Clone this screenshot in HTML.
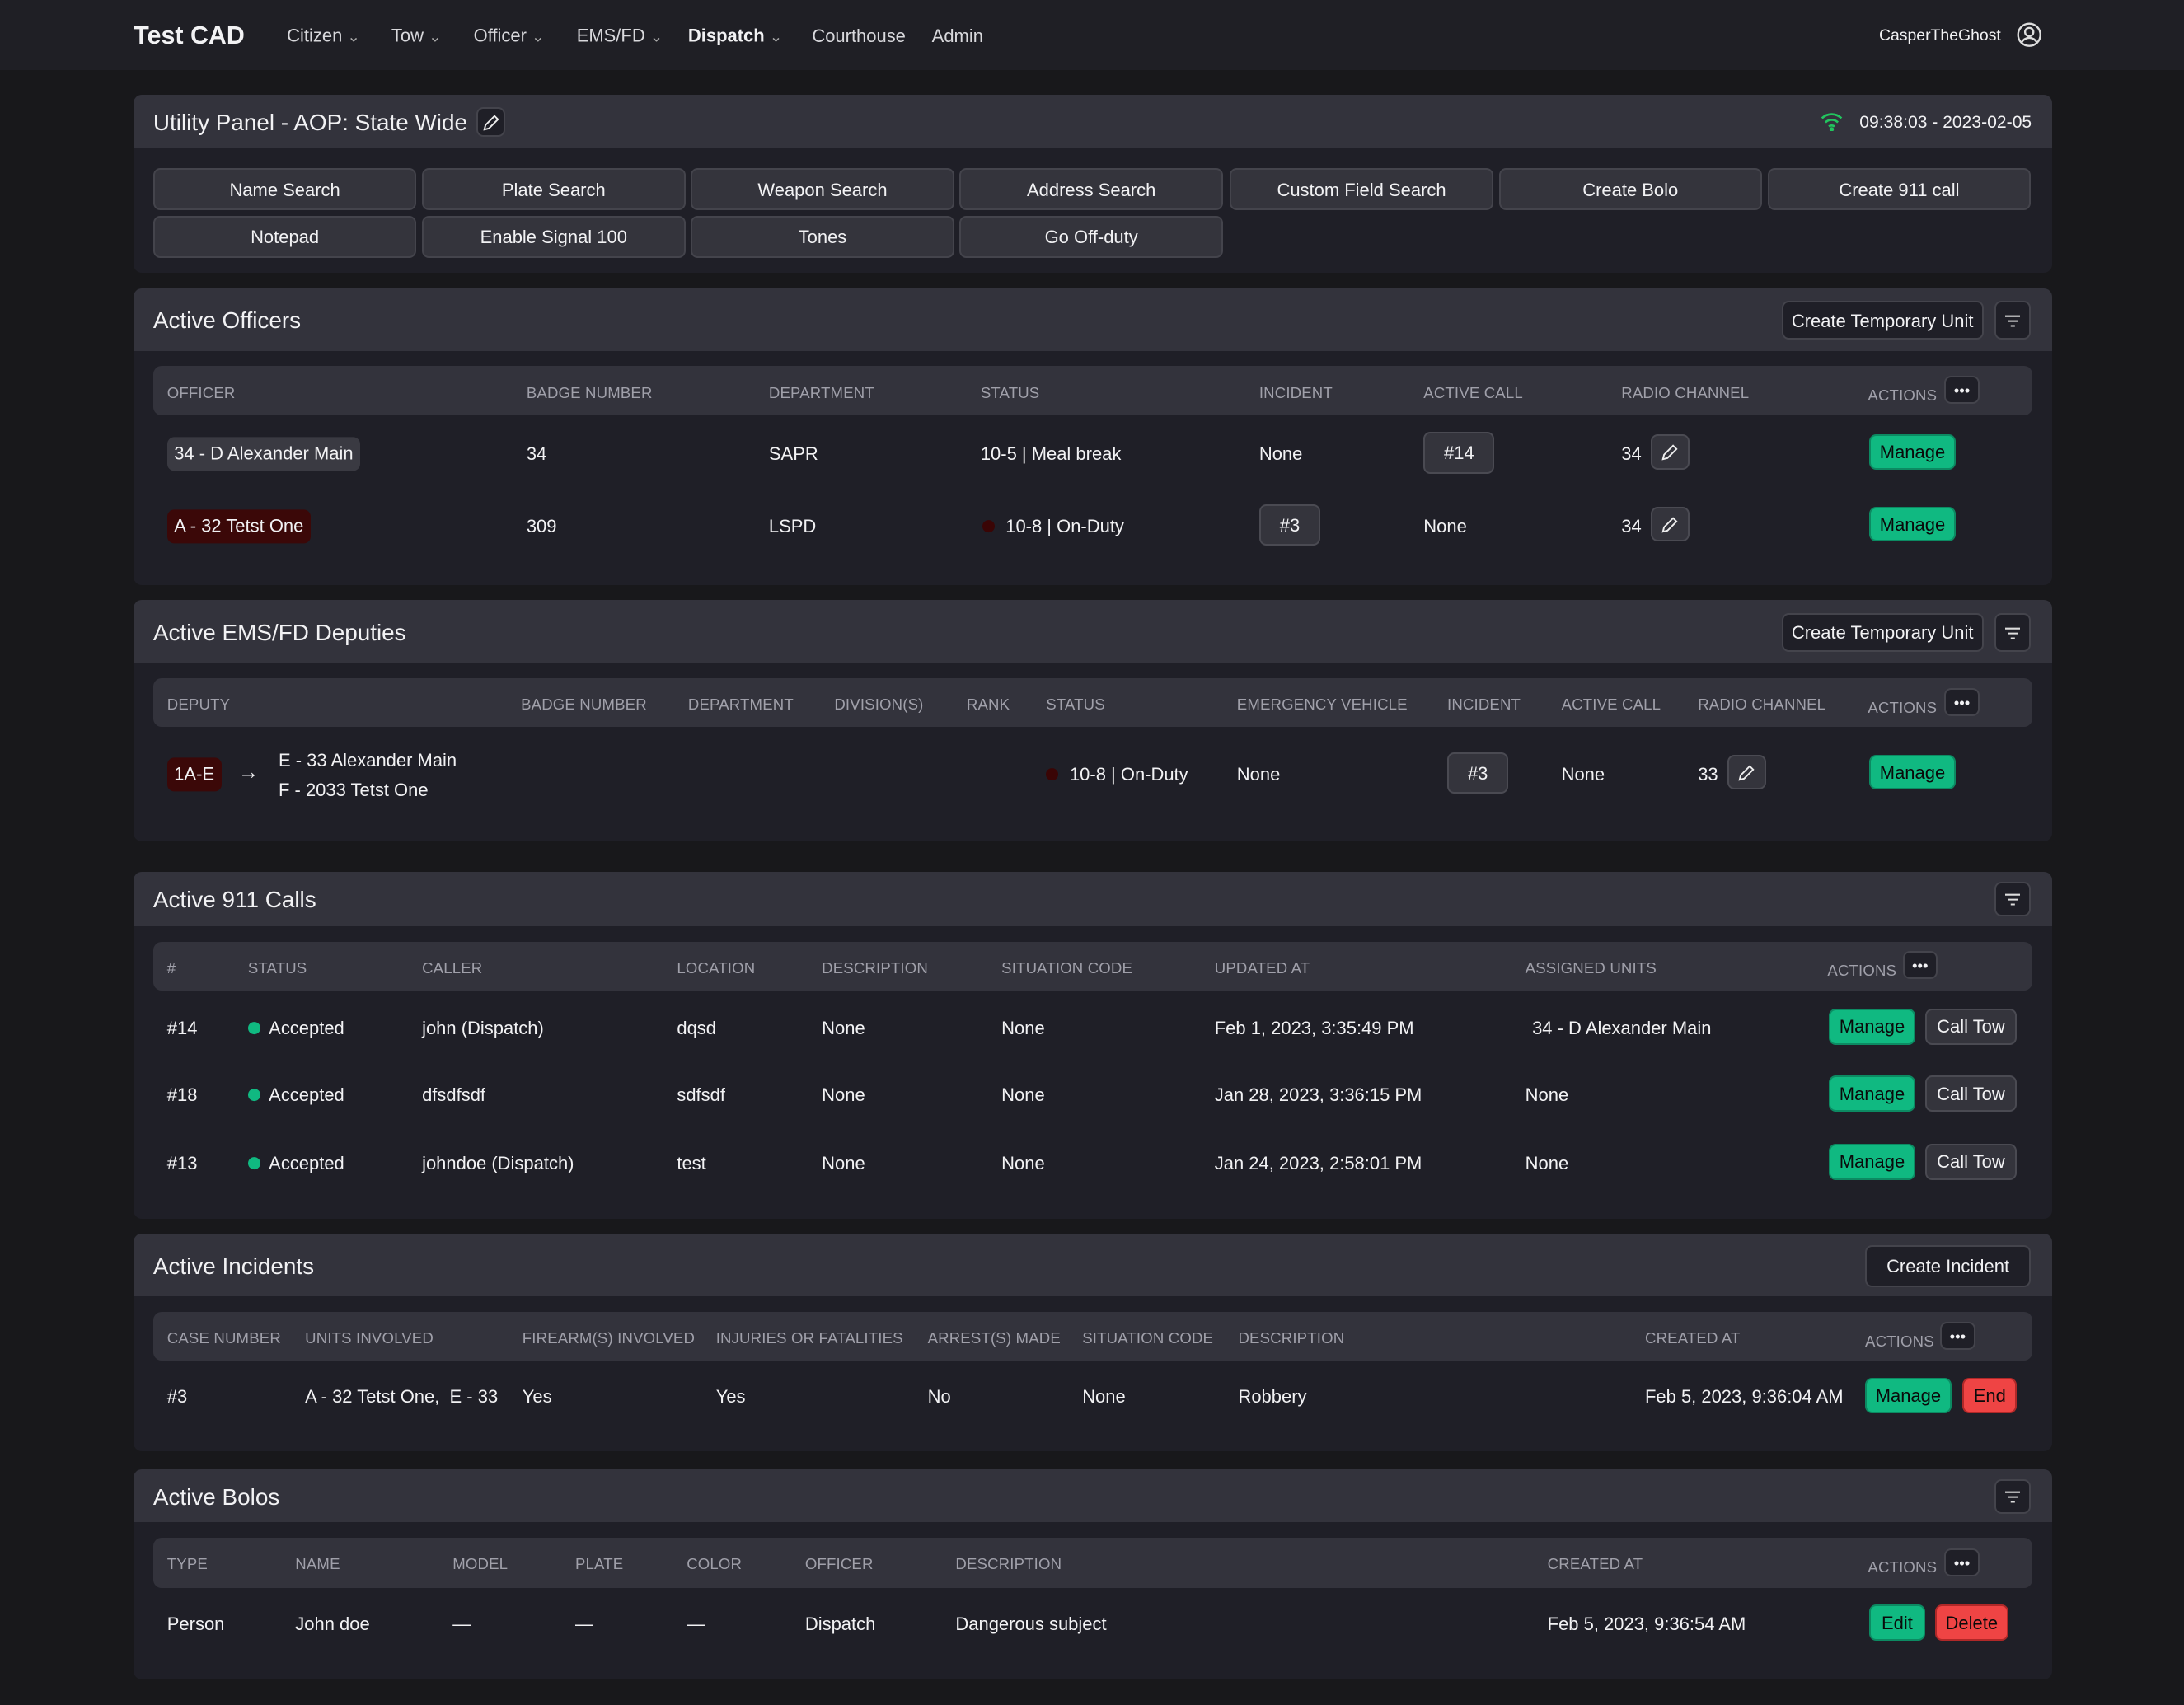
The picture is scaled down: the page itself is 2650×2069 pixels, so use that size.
<!DOCTYPE html>
<html><head><meta charset="utf-8">
<style>
html,body{margin:0;padding:0;background:#18181b;}
body{width:2650px;height:2068px;overflow:hidden;}
#z{zoom:1.6901;width:1568px;height:1224px;position:relative;font-family:"Liberation Sans",sans-serif;color:#f2f2f4;font-size:13px;}
.a{position:absolute;}
.t{position:absolute;white-space:nowrap;line-height:20px;transform:translateY(calc(-50% + 1px));}
.nav{left:0;top:0;width:1568px;height:50px;background:#1f1f25;}
.card{position:absolute;left:96px;width:1377px;background:#1f1f27;border-radius:6px;overflow:hidden;}
.hd{position:absolute;left:0;top:0;width:100%;background:#33333c;}
.th{position:absolute;left:14px;width:1349px;background:#33333c;border-radius:6px;}
.h{font-size:11px;color:#a0a0aa;letter-spacing:.1px;}
.ttl{font-size:16.5px;font-weight:normal;}
.b{position:absolute;display:flex;align-items:center;justify-content:center;border-radius:5px;box-sizing:border-box;white-space:nowrap;font-size:13px;padding-top:1px;}
.ub{background:#34343c;border:1.5px solid #44444c;}
.g{background:#10b981;border:1.5px solid #0c8a62;color:#0a0a0a;}
.r{background:#ef4444;border:1.5px solid #b02828;color:#0a0a0a;}
.gr{background:#34343c;border:1.5px solid #4a4a52;}
.dk{background:#1f1f27;border:1.5px solid #44444c;}
.chip{position:absolute;border-radius:5px;padding:0 5px;line-height:24px;transform:translateY(calc(-50% + 1px));white-space:nowrap;}
.dot{position:absolute;width:9px;height:9px;border-radius:50%;transform:translateY(calc(-50% + 1px));}
.cv{color:#aaa;font-size:11px;}
</style></head><body><div id="z">

<div class="a nav"></div>
<div class="t" style="left:96px;top:25px;font-size:18px;font-weight:bold;">Test CAD</div>
<div class="t" style="left:206px;top:25px;color:#d8d8dc">Citizen <span class="cv">&#8964;</span></div>
<div class="t" style="left:281px;top:25px;color:#d8d8dc">Tow <span class="cv">&#8964;</span></div>
<div class="t" style="left:340px;top:25px;color:#d8d8dc">Officer <span class="cv">&#8964;</span></div>
<div class="t" style="left:414px;top:25px;color:#d8d8dc">EMS/FD <span class="cv">&#8964;</span></div>
<div class="t" style="left:494px;top:25px;font-weight:bold">Dispatch <span class="cv" style="font-weight:normal">&#8964;</span></div>
<div class="t" style="left:583px;top:25px;color:#d8d8dc">Courthouse</div>
<div class="t" style="left:669px;top:25px;color:#d8d8dc">Admin</div>
<div class="t" style="left:1349px;top:25px;font-size:11.5px">CasperTheGhost</div>
<svg class="a" style="left:1448px;top:16px" width="18" height="18" viewBox="0 0 18 18" fill="none" stroke="#ddd" stroke-width="1.4"><circle cx="9" cy="9" r="8"/><circle cx="9" cy="7" r="3"/><path d="M3.5 14.5c1.5-2.5 3.3-3.3 5.5-3.3s4 .8 5.5 3.3"/></svg>

<!-- Utility -->
<div class="card" style="top:68px;height:128px">
 <div class="hd" style="height:38px"></div>
 <div class="t ttl" style="left:14px;top:19px">Utility Panel - AOP: State Wide</div>
 <div class="b dk" style="left:246px;top:9px;width:21px;height:21px"><svg width="13" height="13" viewBox="0 0 16 16" fill="none" stroke="#eee" stroke-width="1.4"><path d="M11 2l3 3-8 8-4 1 1-4z"/></svg></div>
 <svg class="a" style="left:1211px;top:12px" width="16" height="14" viewBox="0 0 16 14" fill="none" stroke="#22c55e" stroke-width="1.6"><path d="M1 5a10 10 0 0 1 14 0M3.5 8a6.5 6.5 0 0 1 9 0M6 11a3 3 0 0 1 4 0"/><circle cx="8" cy="13" r=".8" fill="#22c55e"/></svg>
 <div class="t" style="left:1239px;top:19px;font-size:12.5px">09:38:03 - 2023-02-05</div>
 <div class="b ub" style="left:14px;top:53px;width:189px;height:30px">Name Search</div>
 <div class="b ub" style="left:207px;top:53px;width:189px;height:30px">Plate Search</div>
 <div class="b ub" style="left:400px;top:53px;width:189px;height:30px">Weapon Search</div>
 <div class="b ub" style="left:593px;top:53px;width:189px;height:30px">Address Search</div>
 <div class="b ub" style="left:787px;top:53px;width:189px;height:30px">Custom Field Search</div>
 <div class="b ub" style="left:980px;top:53px;width:189px;height:30px">Create Bolo</div>
 <div class="b ub" style="left:1173px;top:53px;width:189px;height:30px">Create 911 call</div>
 <div class="b ub" style="left:14px;top:87px;width:189px;height:30px">Notepad</div>
 <div class="b ub" style="left:207px;top:87px;width:189px;height:30px">Enable Signal 100</div>
 <div class="b ub" style="left:400px;top:87px;width:189px;height:30px">Tones</div>
 <div class="b ub" style="left:593px;top:87px;width:189px;height:30px">Go Off-duty</div>
</div>

<!-- Active Officers -->
<div class="card" style="top:207px;height:213px">
 <div class="hd" style="height:45px"></div>
 <div class="t ttl" style="left:14px;top:22px">Active Officers</div>
 <div class="b dk" style="left:1183px;top:9px;width:145px;height:28px">Create Temporary Unit</div>
 <div class="b dk" style="left:1336px;top:9px;width:26px;height:28px"><svg width="11" height="9" viewBox="0 0 11 9" stroke="#ddd" stroke-width="1.2"><path d="M0 1h11M2 4.5h7M4 8h3"/></svg></div>
 <div class="th" style="top:56px;height:35px"></div>
 <div class="t h" style="left:24px;top:74px">OFFICER</div>
 <div class="t h" style="left:282px;top:74px">BADGE NUMBER</div>
 <div class="t h" style="left:456px;top:74px">DEPARTMENT</div>
 <div class="t h" style="left:608px;top:74px">STATUS</div>
 <div class="t h" style="left:808px;top:74px">INCIDENT</div>
 <div class="t h" style="left:926px;top:74px">ACTIVE CALL</div>
 <div class="t h" style="left:1068px;top:74px">RADIO CHANNEL</div>
 <div class="t h" style="left:1245px;top:76px">ACTIONS</div>
 <div class="b dk" style="left:1300px;top:63px;width:25px;height:20px;font-size:11px">•••</div>
 <div class="chip" style="left:24px;top:118px;background:#3a3a42">34 - D Alexander Main</div>
 <div class="t" style="left:282px;top:118px">34</div>
 <div class="t" style="left:456px;top:118px">SAPR</div>
 <div class="t" style="left:608px;top:118px">10-5 | Meal break</div>
 <div class="t" style="left:808px;top:118px">None</div>
 <div class="b gr" style="left:926px;top:103px;width:51px;height:30px">#14</div>
 <div class="t" style="left:1068px;top:118px">34</div>
 <div class="b gr" style="left:1089px;top:105px;width:28px;height:25px"><svg width="13" height="13" viewBox="0 0 16 16" fill="none" stroke="#eee" stroke-width="1.4"><path d="M11 2l3 3-8 8-4 1 1-4z"/></svg></div>
 <div class="b g" style="left:1246px;top:105px;width:62px;height:25px">Manage</div>
 <div class="chip" style="left:24px;top:170px;background:#3b0808">A - 32 Tetst One</div>
 <div class="t" style="left:282px;top:170px">309</div>
 <div class="t" style="left:456px;top:170px">LSPD</div>
 <div class="dot" style="left:609px;top:170px;background:#3a0505"></div>
 <div class="t" style="left:626px;top:170px">10-8 | On-Duty</div>
 <div class="b gr" style="left:808px;top:155px;width:44px;height:30px">#3</div>
 <div class="t" style="left:926px;top:170px">None</div>
 <div class="t" style="left:1068px;top:170px">34</div>
 <div class="b gr" style="left:1089px;top:157px;width:28px;height:25px"><svg width="13" height="13" viewBox="0 0 16 16" fill="none" stroke="#eee" stroke-width="1.4"><path d="M11 2l3 3-8 8-4 1 1-4z"/></svg></div>
 <div class="b g" style="left:1246px;top:157px;width:62px;height:25px">Manage</div>
</div>

<!-- EMS -->
<div class="card" style="top:431px;height:173px">
 <div class="hd" style="height:45px"></div>
 <div class="t ttl" style="left:14px;top:22px">Active EMS/FD Deputies</div>
 <div class="b dk" style="left:1183px;top:9px;width:145px;height:28px">Create Temporary Unit</div>
 <div class="b dk" style="left:1336px;top:9px;width:26px;height:28px"><svg width="11" height="9" viewBox="0 0 11 9" stroke="#ddd" stroke-width="1.2"><path d="M0 1h11M2 4.5h7M4 8h3"/></svg></div>
 <div class="th" style="top:56px;height:35px"></div>
 <div class="t h" style="left:24px;top:74px">DEPUTY</div>
 <div class="t h" style="left:278px;top:74px">BADGE NUMBER</div>
 <div class="t h" style="left:398px;top:74px">DEPARTMENT</div>
 <div class="t h" style="left:503px;top:74px">DIVISION(S)</div>
 <div class="t h" style="left:598px;top:74px">RANK</div>
 <div class="t h" style="left:655px;top:74px">STATUS</div>
 <div class="t h" style="left:792px;top:74px">EMERGENCY VEHICLE</div>
 <div class="t h" style="left:943px;top:74px">INCIDENT</div>
 <div class="t h" style="left:1025px;top:74px">ACTIVE CALL</div>
 <div class="t h" style="left:1123px;top:74px">RADIO CHANNEL</div>
 <div class="t h" style="left:1245px;top:76px">ACTIONS</div>
 <div class="b dk" style="left:1300px;top:63px;width:25px;height:20px;font-size:11px">•••</div>
 <div class="chip" style="left:24px;top:124px;background:#3b0808">1A-E</div>
 <div class="t" style="left:75px;top:123px;font-size:15px">&rarr;</div>
 <div class="t" style="left:104px;top:114px">E - 33 Alexander Main</div>
 <div class="t" style="left:104px;top:135px">F - 2033 Tetst One</div>
 <div class="dot" style="left:655px;top:124px;background:#3a0505"></div>
 <div class="t" style="left:672px;top:124px">10-8 | On-Duty</div>
 <div class="t" style="left:792px;top:124px">None</div>
 <div class="b gr" style="left:943px;top:109px;width:44px;height:30px">#3</div>
 <div class="t" style="left:1025px;top:124px">None</div>
 <div class="t" style="left:1123px;top:124px">33</div>
 <div class="b gr" style="left:1144px;top:111px;width:28px;height:25px"><svg width="13" height="13" viewBox="0 0 16 16" fill="none" stroke="#eee" stroke-width="1.4"><path d="M11 2l3 3-8 8-4 1 1-4z"/></svg></div>
 <div class="b g" style="left:1246px;top:111px;width:62px;height:25px">Manage</div>
</div>

<!-- 911 -->
<div class="card" style="top:626px;height:249px">
 <div class="hd" style="height:39px"></div>
 <div class="t ttl" style="left:14px;top:19px">Active 911 Calls</div>
 <div class="b dk" style="left:1336px;top:7px;width:26px;height:25px"><svg width="11" height="9" viewBox="0 0 11 9" stroke="#ddd" stroke-width="1.2"><path d="M0 1h11M2 4.5h7M4 8h3"/></svg></div>
 <div class="th" style="top:50px;height:35px"></div>
 <div class="t h" style="left:24px;top:68px">#</div>
 <div class="t h" style="left:82px;top:68px">STATUS</div>
 <div class="t h" style="left:207px;top:68px">CALLER</div>
 <div class="t h" style="left:390px;top:68px">LOCATION</div>
 <div class="t h" style="left:494px;top:68px">DESCRIPTION</div>
 <div class="t h" style="left:623px;top:68px">SITUATION CODE</div>
 <div class="t h" style="left:776px;top:68px">UPDATED AT</div>
 <div class="t h" style="left:999px;top:68px">ASSIGNED UNITS</div>
 <div class="t h" style="left:1216px;top:70px">ACTIONS</div>
 <div class="b dk" style="left:1270px;top:57px;width:25px;height:20px;font-size:11px">•••</div>

 <div class="t" style="left:24px;top:111px">#14</div>
 <div class="dot" style="left:82px;top:111px;background:#10b981"></div>
 <div class="t" style="left:97px;top:111px">Accepted</div>
 <div class="t" style="left:207px;top:111px">john (Dispatch)</div>
 <div class="t" style="left:390px;top:111px">dqsd</div>
 <div class="t" style="left:494px;top:111px">None</div>
 <div class="t" style="left:623px;top:111px">None</div>
 <div class="t" style="left:776px;top:111px">Feb 1, 2023, 3:35:49 PM</div>
 <div class="t" style="left:1004px;top:111px">34 - D Alexander Main</div>
 <div class="b g" style="left:1217px;top:98px;width:62px;height:26px">Manage</div>
 <div class="b gr" style="left:1286px;top:98px;width:66px;height:26px">Call Tow</div>

 <div class="t" style="left:24px;top:159px">#18</div>
 <div class="dot" style="left:82px;top:159px;background:#10b981"></div>
 <div class="t" style="left:97px;top:159px">Accepted</div>
 <div class="t" style="left:207px;top:159px">dfsdfsdf</div>
 <div class="t" style="left:390px;top:159px">sdfsdf</div>
 <div class="t" style="left:494px;top:159px">None</div>
 <div class="t" style="left:623px;top:159px">None</div>
 <div class="t" style="left:776px;top:159px">Jan 28, 2023, 3:36:15 PM</div>
 <div class="t" style="left:999px;top:159px">None</div>
 <div class="b g" style="left:1217px;top:146px;width:62px;height:26px">Manage</div>
 <div class="b gr" style="left:1286px;top:146px;width:66px;height:26px">Call Tow</div>

 <div class="t" style="left:24px;top:208px">#13</div>
 <div class="dot" style="left:82px;top:208px;background:#10b981"></div>
 <div class="t" style="left:97px;top:208px">Accepted</div>
 <div class="t" style="left:207px;top:208px">johndoe (Dispatch)</div>
 <div class="t" style="left:390px;top:208px">test</div>
 <div class="t" style="left:494px;top:208px">None</div>
 <div class="t" style="left:623px;top:208px">None</div>
 <div class="t" style="left:776px;top:208px">Jan 24, 2023, 2:58:01 PM</div>
 <div class="t" style="left:999px;top:208px">None</div>
 <div class="b g" style="left:1217px;top:195px;width:62px;height:26px">Manage</div>
 <div class="b gr" style="left:1286px;top:195px;width:66px;height:26px">Call Tow</div>
</div>

<!-- Incidents -->
<div class="card" style="top:886px;height:156px">
 <div class="hd" style="height:45px"></div>
 <div class="t ttl" style="left:14px;top:22px">Active Incidents</div>
 <div class="b dk" style="left:1243px;top:8px;width:119px;height:30px">Create Incident</div>
 <div class="th" style="top:56px;height:35px"></div>
 <div class="t h" style="left:24px;top:74px">CASE NUMBER</div>
 <div class="t h" style="left:123px;top:74px">UNITS INVOLVED</div>
 <div class="t h" style="left:279px;top:74px">FIREARM(S) INVOLVED</div>
 <div class="t h" style="left:418px;top:74px">INJURIES OR FATALITIES</div>
 <div class="t h" style="left:570px;top:74px">ARREST(S) MADE</div>
 <div class="t h" style="left:681px;top:74px">SITUATION CODE</div>
 <div class="t h" style="left:793px;top:74px">DESCRIPTION</div>
 <div class="t h" style="left:1085px;top:74px">CREATED AT</div>
 <div class="t h" style="left:1243px;top:76px">ACTIONS</div>
 <div class="b dk" style="left:1297px;top:63px;width:25px;height:20px;font-size:11px">•••</div>
 <div class="t" style="left:24px;top:116px">#3</div>
 <div class="t" style="left:123px;top:116px">A - 32 Tetst One,&nbsp; E - 33</div>
 <div class="t" style="left:279px;top:116px">Yes</div>
 <div class="t" style="left:418px;top:116px">Yes</div>
 <div class="t" style="left:570px;top:116px">No</div>
 <div class="t" style="left:681px;top:116px">None</div>
 <div class="t" style="left:793px;top:116px">Robbery</div>
 <div class="t" style="left:1085px;top:116px">Feb 5, 2023, 9:36:04 AM</div>
 <div class="b g" style="left:1243px;top:103px;width:62px;height:26px">Manage</div>
 <div class="b r" style="left:1313px;top:103px;width:39px;height:26px">End</div>
</div>

<!-- Bolos -->
<div class="card" style="top:1055px;height:151px">
 <div class="hd" style="height:38px"></div>
 <div class="t ttl" style="left:14px;top:19px">Active Bolos</div>
 <div class="b dk" style="left:1336px;top:7px;width:26px;height:25px"><svg width="11" height="9" viewBox="0 0 11 9" stroke="#ddd" stroke-width="1.2"><path d="M0 1h11M2 4.5h7M4 8h3"/></svg></div>
 <div class="th" style="top:49px;height:36px"></div>
 <div class="t h" style="left:24px;top:67px">TYPE</div>
 <div class="t h" style="left:116px;top:67px">NAME</div>
 <div class="t h" style="left:229px;top:67px">MODEL</div>
 <div class="t h" style="left:317px;top:67px">PLATE</div>
 <div class="t h" style="left:397px;top:67px">COLOR</div>
 <div class="t h" style="left:482px;top:67px">OFFICER</div>
 <div class="t h" style="left:590px;top:67px">DESCRIPTION</div>
 <div class="t h" style="left:1015px;top:67px">CREATED AT</div>
 <div class="t h" style="left:1245px;top:69px">ACTIONS</div>
 <div class="b dk" style="left:1300px;top:57px;width:25px;height:20px;font-size:11px">•••</div>
 <div class="t" style="left:24px;top:110px">Person</div>
 <div class="t" style="left:116px;top:110px">John doe</div>
 <div class="t" style="left:229px;top:110px">—</div>
 <div class="t" style="left:317px;top:110px">—</div>
 <div class="t" style="left:397px;top:110px">—</div>
 <div class="t" style="left:482px;top:110px">Dispatch</div>
 <div class="t" style="left:590px;top:110px">Dangerous subject</div>
 <div class="t" style="left:1015px;top:110px">Feb 5, 2023, 9:36:54 AM</div>
 <div class="b g" style="left:1246px;top:97px;width:40px;height:26px">Edit</div>
 <div class="b r" style="left:1293px;top:97px;width:53px;height:26px">Delete</div>
</div>

</div></body></html>
